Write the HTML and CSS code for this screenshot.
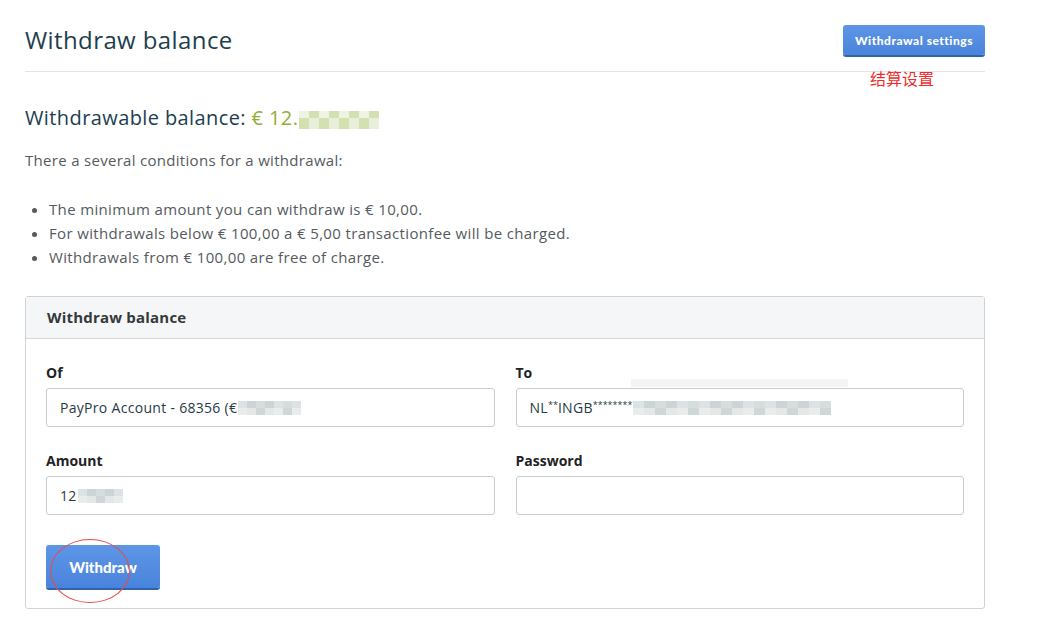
FILE: index.html
```html
<!DOCTYPE html>
<html lang="en">
<head>
    <meta charset="UTF-8">
    <meta name="viewport" content="width=device-width, initial-scale=1.0">
    <title>Withdraw balance</title>
    <link rel="stylesheet" href="styles.css">
</head>
<body>
    <div class="page">
        <header class="page-header">
            <h1>Withdraw balance</h1>
            <div class="settings">
                <button class="btn btn-small">Withdrawal settings</button>
                <span class="note">结算设置</span>
            </div>
        </header>

        <h2 class="balance">Withdrawable balance: <span class="amount">€ 12.<span class="blur blur-green"><i></i><i></i><i></i><i></i><i></i><i></i><i></i><i></i></span></span></h2>

        <p class="intro">There a several conditions for a withdrawal:</p>
        <ul class="conditions">
            <li>The minimum amount you can withdraw is € 10,00.</li>
            <li>For withdrawals below € 100,00 a € 5,00 transactionfee will be charged.</li>
            <li>Withdrawals from € 100,00 are free of charge.</li>
        </ul>

        <div class="panel">
            <div class="panel-head">Withdraw balance</div>
            <div class="panel-body">
                <div class="form-grid">
                    <div class="field">
                        <label>Of</label>
                        <div class="input">PayPro Account - 68356 (€<span class="blur"><i></i><i></i><i></i><i></i><i></i><i></i><i></i></span></div>
                    </div>
                    <div class="field">
                        <label>To</label>
                        <div class="input">NL<span class="stars">**</span>INGB<span class="stars">********</span><span class="blur blur-long"><i></i><i></i><i></i><i></i><i></i><i></i><i></i><i></i><i></i><i></i><i></i><i></i><i></i><i></i><i></i><i></i><i></i><i></i></span></div>
                        <span class="autofill-strip"></span>
                    </div>
                    <div class="field">
                        <label>Amount</label>
                        <div class="input">12<span class="blur"><i></i><i></i><i></i><i></i><i></i></span></div>
                    </div>
                    <div class="field">
                        <label>Password</label>
                        <div class="input"></div>
                    </div>
                </div>
                <div class="submit">
                    <button class="btn btn-large">Withdraw</button>
                    <span class="circle"></span>
                </div>
            </div>
        </div>
    </div>
</body>
</html>
```

FILE: styles.css
```css
body {
    font-family: "Open Sans", "Noto Sans", sans-serif;
    margin: 0;
    background-color: #ffffff;
    color: #555b60;
}

.page {
    width: 960px;
    margin-left: 25px;
}

.page-header {
    display: flex;
    justify-content: space-between;
    align-items: flex-start;
    height: 72px;
    border-bottom: 1px solid #e2e4e6;
    box-sizing: border-box;
}

.page-header h1 {
    margin: 23px 0 0 0;
    font-size: 24px;
    font-weight: 400;
    letter-spacing: 0.4px;
    color: #1d3e4f;
}

.settings {
    position: relative;
    margin-top: 25px;
}

.note {
    position: absolute;
    left: 27px;
    top: 41px;
    font-family: "Noto Sans CJK SC", sans-serif;
    font-size: 16px;
    color: #ee2c2c;
    white-space: nowrap;
}

.btn {
    font-family: "Lato", sans-serif;
    font-weight: 900;
    color: #ffffff;
    border: none;
    border-radius: 3px;
    background: linear-gradient(#5e96e6, #4a83dc);
    box-shadow: 0 2px 0 #2f63ad;
    cursor: pointer;
}

.btn-small {
    width: 142px;
    height: 30px;
    font-size: 12px;
    letter-spacing: 0.5px;
}

.btn-large {
    width: 114px;
    height: 43px;
    font-size: 15px;
}

.balance {
    margin: 32px 0 0 0;
    font-size: 20px;
    font-weight: 400;
    letter-spacing: 0.4px;
    color: #1d3e4f;
}

.amount {
    color: #94ac3a;
}

.blur {
    display: inline-flex;
    vertical-align: middle;
    margin-left: 1px;
}

.blur i {
    display: block;
    width: 10px;
    height: 16px;
    background: linear-gradient(#dde3e4 50%, #e8eceb 50%);
}

.blur i:nth-child(2n) {
    background: linear-gradient(#cdd4d6 50%, #e3e7e7 50%);
}

.blur i:nth-child(3n) {
    background: linear-gradient(#d6dddd 50%, #cfd6d7 50%);
}

.blur-green i,
.blur-green i:nth-child(2n),
.blur-green i:nth-child(3n) {
    background: linear-gradient(#eef3e2 40%, #d3e1b0 40%);
    height: 18px;
}

.blur-green i:nth-child(2n) {
    background: linear-gradient(#d2e0b2 40%, #e9efdb 40%);
}

.intro {
    margin: 18px 0 0 0;
    font-size: 15px;
    line-height: 22px;
    letter-spacing: 0.3px;
}

.conditions {
    margin: 26px 0 0 0;
    padding-left: 24px;
    font-size: 15px;
    line-height: 24px;
    letter-spacing: 0.35px;
}

.panel {
    margin-top: 27px;
    border: 1px solid #cfd3d7;
    border-radius: 3px;
}

.panel-head {
    height: 41px;
    line-height: 41px;
    padding-left: 21px;
    background-color: #f5f6f8;
    border-bottom: 1px solid #d6d9dc;
    font-size: 15px;
    font-weight: 700;
    letter-spacing: 0.2px;
    color: #35393c;
}

.panel-body {
    padding: 24px 20px 20px 20px;
}

.form-grid {
    display: grid;
    grid-template-columns: 1fr 1fr;
    column-gap: 21px;
    row-gap: 24px;
}

.field {
    position: relative;
}

.field label {
    display: block;
    height: 20px;
    margin-bottom: 5px;
    font-size: 14px;
    font-weight: 700;
    color: #1f2326;
}

.input {
    height: 39px;
    padding-left: 13px;
    border: 1px solid #c8cdd2;
    border-radius: 3px;
    box-sizing: border-box;
    font-size: 14px;
    letter-spacing: 0.3px;
    color: #2a3a45;
    display: flex;
    align-items: center;
}

.stars {
    font-size: 9px;
    letter-spacing: 0;
    align-self: flex-start;
    margin-top: 9px;
}

.input .blur i {
    width: 9px;
    height: 14px;
}

.blur-long i {
    width: 11px !important;
}

.autofill-strip {
    position: absolute;
    left: 115px;
    top: 16px;
    width: 217px;
    height: 8px;
    background-color: #f3f4f6;
}

.submit {
    position: relative;
    margin-top: 30px;
}

.circle {
    position: absolute;
    left: 4px;
    top: -6px;
    width: 78px;
    height: 62px;
    border: 1px solid #e84a4a;
    border-radius: 50%;
    pointer-events: none;
}
```
